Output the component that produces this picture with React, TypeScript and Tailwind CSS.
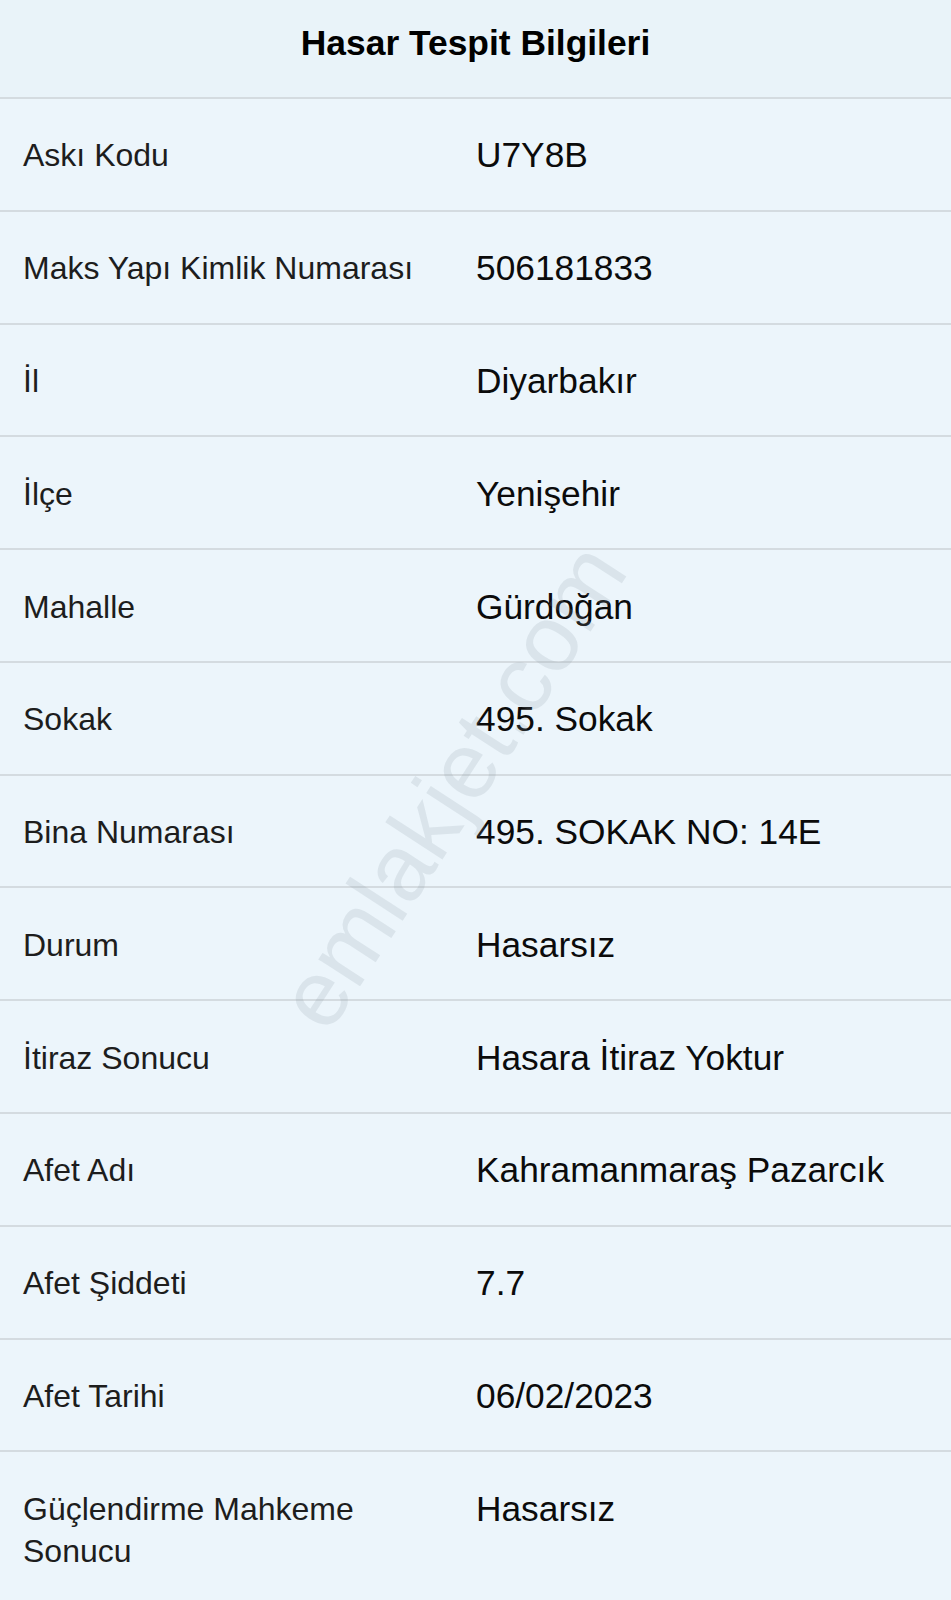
import React from "react";

const rows: [string, string][] = [
  ["Askı Kodu", "U7Y8B"],
  ["Maks Yapı Kimlik Numarası", "506181833"],
  ["İl", "Diyarbakır"],
  ["İlçe", "Yenişehir"],
  ["Mahalle", "Gürdoğan"],
  ["Sokak", "495. Sokak"],
  ["Bina Numarası", "495. SOKAK NO: 14E"],
  ["Durum", "Hasarsız"],
  ["İtiraz Sonucu", "Hasara İtiraz Yoktur"],
  ["Afet Adı", "Kahramanmaraş Pazarcık"],
  ["Afet Şiddeti", "7.7"],
  ["Afet Tarihi", "06/02/2023"],
  ["Güçlendirme Mahkeme Sonucu", "Hasarsız"],
];

export default function App() {
  return (
    <div
      className="relative w-[951px] h-[1600px] overflow-hidden bg-[#ecf5fb]"
      style={{ fontFamily: '"Liberation Sans", Arial, sans-serif' }}
    >
      <div className="h-[99px] pt-[22px] bg-[#e9f3f9] border-b-2 border-[#d4dbe0] text-center">
        <h1 className="text-[35.4px] leading-[42px] font-bold text-black">Hasar Tespit Bilgileri</h1>
      </div>
      {rows.map(([label, value], i) => {
        const last = i === rows.length - 1;
        return (
          <div
            key={label}
            className={
              last
                ? "grid grid-cols-[476px_1fr] items-start pt-[35.4px]"
                : "grid grid-cols-[476px_1fr] items-start pt-[35.4px] pb-[33.4px] border-b-2 border-[#d4dbe0]"
            }
          >
            <div className="pl-[23px] pr-[24px] text-[32px] leading-[42px] text-[#1d1d1d]">{label}</div>
            <div className="text-[35.3px] leading-[42px] text-[#0b0b0b]">{value}</div>
          </div>
        );
      })}
      <div className="pointer-events-none absolute left-[452px] top-[786px] -translate-x-1/2 -translate-y-1/2 -rotate-[57deg] text-[94px] leading-none whitespace-nowrap text-[#8a9aa6]/[0.18]">
        emlakjet.com
      </div>
    </div>
  );
}
